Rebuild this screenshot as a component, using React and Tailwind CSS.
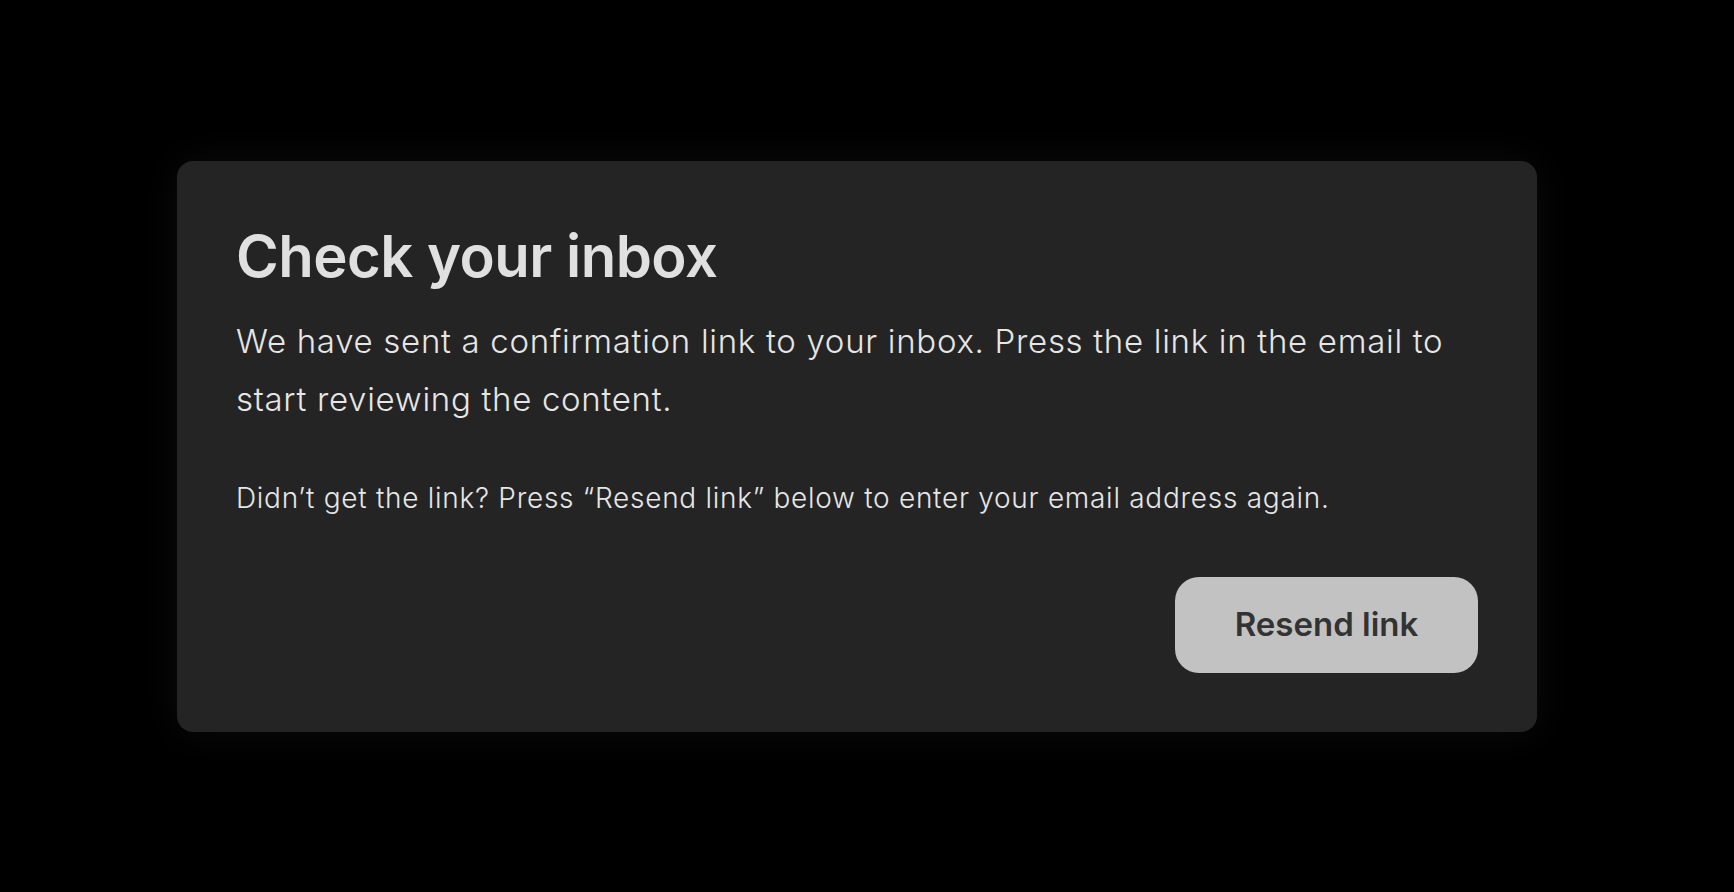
export default function App() {
  return (
    <div className="min-h-screen h-[892px] bg-[#000000] flex items-center justify-center pr-[20px] font-['Inter',sans-serif]">
      <div className="w-[1360px] h-[571px] rounded-[16px] bg-[#242424] shadow-[0_0_40px_rgba(20,20,20,0.6)] px-[59px] pt-[60px] pb-[59px] flex flex-col">
        {/* Heading */}
        <h1 className="text-[58px] leading-[70px] font-semibold text-[#e0e0e0] tracking-[-0.5px]">Check your inbox</h1>
        <p className="mt-[21px] text-[33px] leading-[58px] tracking-[0.7px] font-light text-[#e6e6e6]">
          We have sent a confirmation link to your inbox. Press the link in the email to start reviewing the content.
        </p>
        <p className="mt-[48px] text-[28px] leading-[44px] tracking-[0.72px] font-light text-[#e6e6e6]">
          Didn’t get the link? Press “Resend link” below to enter your email address again.
        </p>

        <div className="mt-auto flex justify-end">
          <button className="w-[303px] h-[96px] rounded-[24px] bg-[#c2c2c2] text-[#333333] text-[33px] font-semibold border-0 cursor-pointer">
            Resend link
          </button>
        </div>
      </div>
    </div>
  );
}
